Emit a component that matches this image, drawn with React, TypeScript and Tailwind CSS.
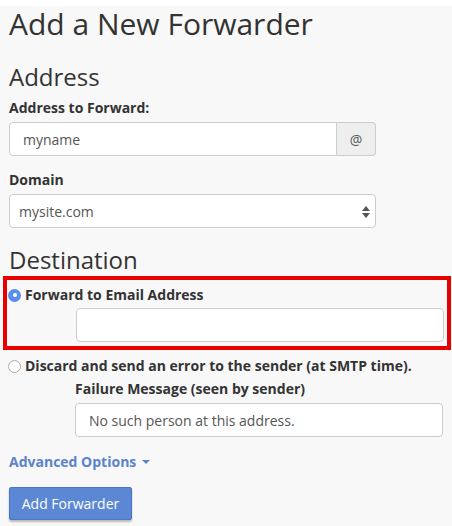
import React from "react";

export default function App() {
  return (
    <div
      className="w-[452px] h-[526px] overflow-hidden bg-[#f7f8f7] text-[#333]"
      style={{ fontFamily: '"Open Sans", sans-serif' }}
    >
      <div className="h-[6px] bg-white" />
      <div className="px-[9px]">
        <h1 className="text-[30px] leading-[36px] font-normal mt-[0px]">Add a New Forwarder</h1>
        <h2 className="text-[24px] leading-[30px] font-normal mt-[20px]">Address</h2>
        <label className="block text-[14px] font-bold leading-[20px] mt-[6px]">Address to Forward:</label>
        <div className="flex w-[367px] h-[34px] mt-[4px]">
          <div className="flex-1 flex items-center pl-[13px] bg-white border border-[#ccc] rounded-l-[4px] text-[14px] text-[#555]">
            myname
          </div>
          <div className="w-[39px] flex items-center justify-center bg-[#eee] border border-l-0 border-[#ccc] rounded-r-[4px] text-[14px] text-[#555]">
            @
          </div>
        </div>
        <label className="block text-[14px] font-bold leading-[20px] mt-[14px]">Domain</label>
        <div className="relative flex items-center w-[367px] h-[34px] mt-[4px] pl-[9px] bg-white border border-[#ccc] rounded-[4px] text-[14px] text-[#555]">
          mysite.com
          <svg className="absolute right-[5px] top-[11px]" width="8" height="12" viewBox="0 0 8 12">
            <path d="M4 0 L8 5 L0 5 Z" fill="#555" />
            <path d="M0 7 L8 7 L4 12 Z" fill="#555" />
          </svg>
        </div>
        <h2 className="text-[24px] leading-[30px] font-normal mt-[17px]">Destination</h2>
      </div>
      <div className="ml-[3px] w-[448px] mt-[1px] border-[4px] border-[#e60000] pt-[5px] pb-[4px] pl-[1px]">
        <div className="flex items-center gap-[4px]">
          <span className="w-[13px] h-[13px] rounded-full bg-[#5b8def] flex items-center justify-center">
            <span className="w-[4px] h-[4px] rounded-full bg-white" />
          </span>
          <span className="text-[14px] font-bold leading-[20px]">Forward to Email Address</span>
        </div>
        <div className="ml-[68px] mt-[3px] w-[368px] h-[34px] bg-white border border-[#ccc] rounded-[4px]" />
      </div>
      <div className="px-[8px] mt-[6px]">
        <div className="flex items-center gap-[4px]">
          <span className="w-[13px] h-[13px] rounded-full bg-white border border-[#aaa]" />
          <span className="text-[14px] font-bold leading-[20px]">Discard and send an error to the sender (at SMTP time).</span>
        </div>
        <div className="ml-[67px]">
          <label className="block text-[14px] font-bold leading-[20px] mt-[3px]">Failure Message (seen by sender)</label>
          <div className="flex items-center mt-[4px] w-[368px] h-[34px] pl-[13px] bg-white border border-[#ccc] rounded-[4px] text-[14px] text-[#555]">
            No such person at this address.
          </div>
        </div>
      </div>
      <div className="px-[9px]">
        <div className="flex items-center gap-[6px] mt-[15px] text-[14px] font-bold leading-[20px] text-[#5b82cc]">
          Advanced Options
          <svg width="8" height="5" viewBox="0 0 8 5">
            <path d="M0 0 L8 0 L4 4 Z" fill="#5b82cc" />
          </svg>
        </div>
        <button className="mt-[15px] w-[123px] h-[33px] bg-[#5b87d4] text-white text-[14px] rounded-[2px] shadow-[0_2px_2px_rgba(0,0,0,0.25)] border border-[#4a76c4]">
          Add Forwarder
        </button>
      </div>
    </div>
  );
}
